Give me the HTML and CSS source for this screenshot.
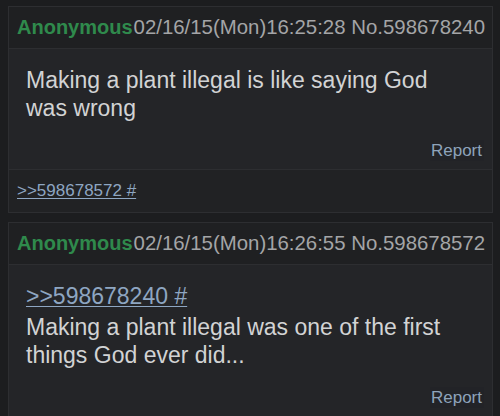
FILE: index.html
```html
<!DOCTYPE html>
<html>
<head>
<meta charset="utf-8">
<link rel="stylesheet" href="styles.css">
</head>
<body>
<div class="thread">
  <div class="post">
    <div class="post-head">
      <span class="name">Anonymous</span><span class="meta">02/16/15(Mon)16:25:28 No.598678240</span>
    </div>
    <div class="post-body">
      <p class="msg">Making a plant illegal is like saying God was wrong</p>
      <div class="actions"><span class="report">Report</span></div>
    </div>
    <div class="post-foot">
      <a class="backlink" href="#">&gt;&gt;598678572 #</a>
    </div>
  </div>
  <div class="post">
    <div class="post-head">
      <span class="name">Anonymous</span><span class="meta">02/16/15(Mon)16:26:55 No.598678572</span>
    </div>
    <div class="post-body">
      <a class="quotelink" href="#">&gt;&gt;598678240 #</a>
      <p class="msg">Making a plant illegal was one of the first things God ever did...</p>
      <div class="actions"><span class="report">Report</span></div>
    </div>
  </div>
</div>
</body>
</html>
```
FILE: styles.css
```css
html, body {
  margin: 0;
  padding: 0;
  background: #1c1d1f;
  height: 100%;
  overflow: hidden;
}
body {
  padding: 6px 7px 0 8px;
  font-family: "Liberation Sans", Arial, sans-serif;
}
.thread {
  display: flex;
  flex-direction: column;
  gap: 9px;
  width: 485px;
}
.post {
  border: 1px solid #2d2e31;
  background: #242528;
}
.post-head {
  height: 41px;
  display: flex;
  align-items: center;
  padding-left: 8px;
  background: #1f2022;
  border-bottom: 1px solid #2d2e31;
  font-size: 20px;
  white-space: nowrap;
}
.name {
  color: #2f8a4c;
  font-weight: bold;
  margin-right: 1px;
}
.meta {
  color: #a4a5a7;
  font-size: 20.4px;
}
.post-body {
  padding: 17px 8px 8px 17px;
  border-bottom: 1px solid #2d2e31;
}
.msg {
  margin: 0;
  color: #d2d3d4;
  font-size: 23px;
  line-height: 28px;
  width: 440px;
}
.quotelink {
  display: block;
  margin-bottom: 3px;
  color: #8ea6c2;
  font-size: 23px;
  line-height: 28px;
  text-decoration: underline;
  text-decoration-thickness: 1px;
  text-underline-offset: 2px;
}
.actions {
  display: flex;
  justify-content: flex-end;
  margin-top: 18px;
}
.report {
  color: #8ea3bb;
  font-size: 17px;
  line-height: 21px;
  padding: 0 2px 0 1px;
  background: #222327;
}
.post-foot {
  height: 42px;
  display: flex;
  align-items: center;
  padding-left: 8px;
  background: #212224;
}
.backlink {
  color: #8ea6c2;
  font-size: 17px;
  text-decoration: underline;
  text-decoration-thickness: 1px;
  text-underline-offset: 2px;
}
```
